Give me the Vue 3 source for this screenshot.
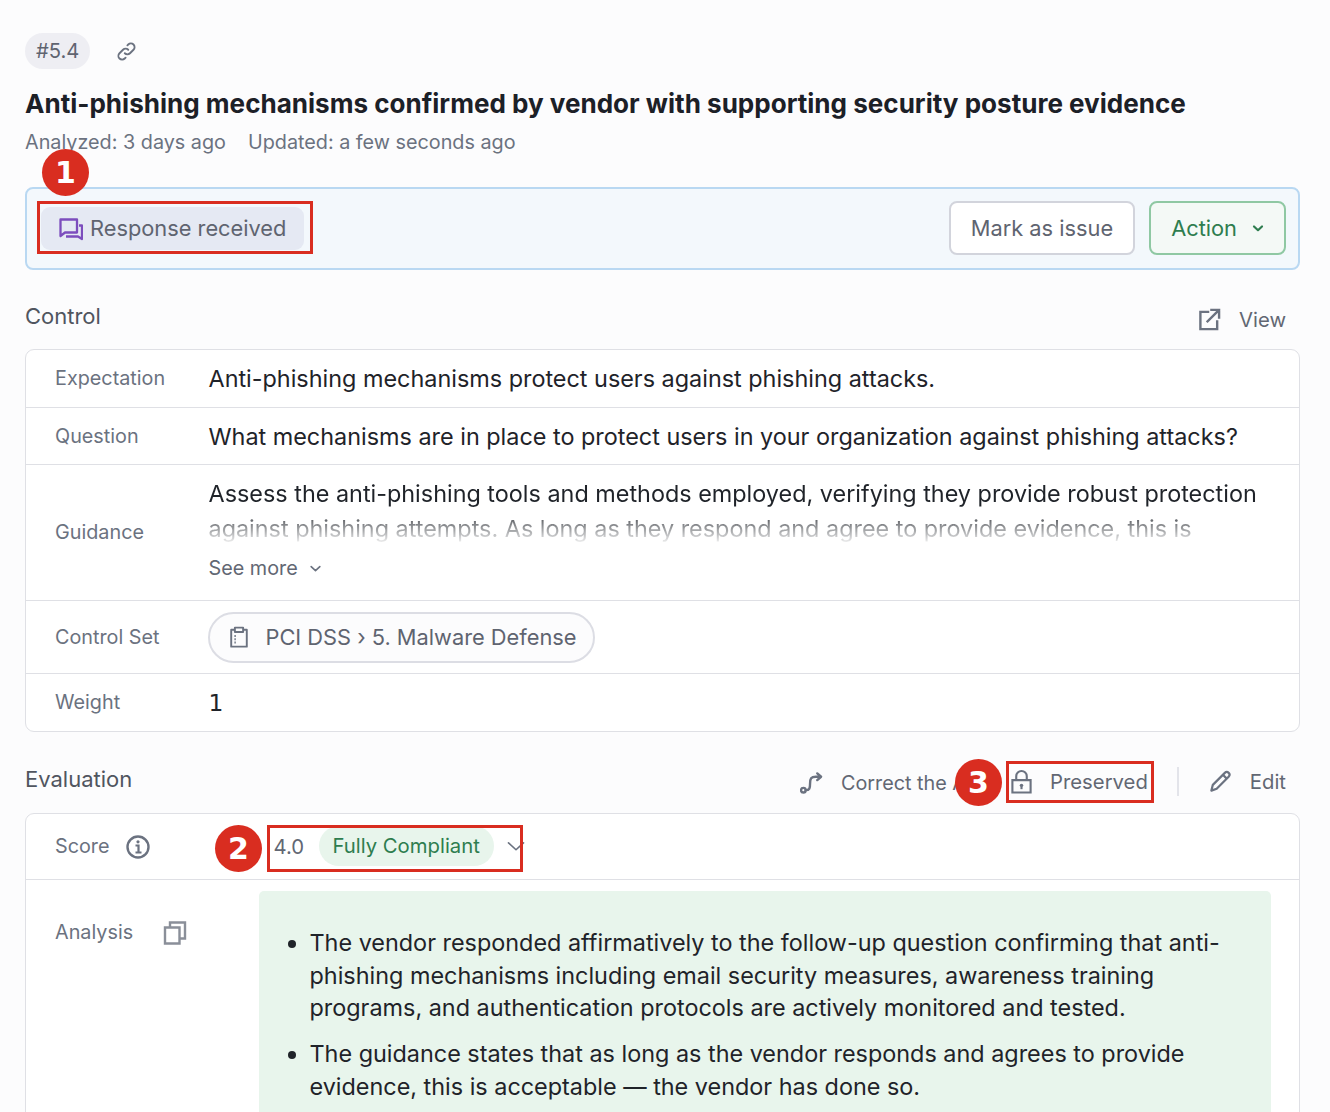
<template>
  <div class="page">
    <div class="top-row">
      <span class="num-chip">#5.4</span>
      <svg class="link-icon" viewBox="0 0 24 24" fill="none" stroke="#6b7280" stroke-width="2.100" stroke-linecap="round" stroke-linejoin="round">
        <path d="M10 14a4.200 4.200 0 0 0 6 0l4-4a4.200 4.200 0 0 0-6-6l-1 1" />
        <path d="M14 10a4.200 4.200 0 0 0-6 0l-4 4a4.200 4.200 0 0 0 6 6l1-1" />
      </svg>
    </div>
    <h1 class="title">Anti-phishing mechanisms confirmed by vendor with supporting security posture evidence</h1>
    <div class="dates">
      <span>Analyzed: 3 days ago</span>
      <span>Updated: a few seconds ago</span>
    </div>

    <div class="status-bar">
      <div class="status-pill">
        <svg class="chat-icon" viewBox="0 0 24 24" fill="none" stroke="#7c4dbd" stroke-width="2.300" stroke-linejoin="round">
          <path d="M1.500 2.500h16.500v13H6L1.500 19z" />
          <path d="M7 19.500h12l4 2.500V8.500h-3" />
        </svg>
        <span>Response received</span>
      </div>
      <div class="status-actions">
        <button class="btn">Mark as issue</button>
        <button class="btn btn-green">
          Action
          <svg class="action-caret" viewBox="0 0 12 12" fill="none" stroke="#2e7d4f" stroke-width="2.200" stroke-linecap="round" stroke-linejoin="round"><path d="M2 4.500 6 8.200l4-3.700" /></svg>
        </button>
      </div>
    </div>

    <div class="section-head control-head">
      <h2>Control</h2>
      <div class="head-actions">
        <span class="head-link">
          <svg class="head-icon" viewBox="0 0 24 24" fill="none" stroke="#6b7280" stroke-width="2.500" stroke-linecap="square">
            <path d="M10.500 4H2.500v18h17.500v-8" />
            <path d="M10 14 21.500 2.500M14 2h8v8" />
          </svg>
          View
        </span>
      </div>
    </div>

    <div class="card">
      <div class="row exp-row">
        <div class="label">Expectation</div>
        <div class="value">Anti-phishing mechanisms protect users against phishing attacks.</div>
      </div>
      <div class="row q-row">
        <div class="label">Question</div>
        <div class="value">What mechanisms are in place to protect users in your organization against phishing attacks?</div>
      </div>
      <div class="row guidance-row">
        <div class="label">Guidance</div>
        <div class="value guidance-value">
          <div class="clamp">Assess the anti-phishing tools and methods employed, verifying they provide robust protection against phishing attempts. As long as they respond and agree to provide evidence, this is</div>
          <div class="see-more">
            See more
            <svg class="see-caret" viewBox="0 0 12 12" fill="none" stroke="#6b7280" stroke-width="1.500" stroke-linecap="round" stroke-linejoin="round"><path d="M2 4.200 6 8l4-3.800" /></svg>
          </div>
        </div>
      </div>
      <div class="row set-row">
        <div class="label">Control Set</div>
        <div class="value">
          <span class="set-chip">
            <svg class="clip-icon" viewBox="0 0 24 24" fill="none" stroke="#6b7280" stroke-width="2.100" stroke-linejoin="round">
              <path d="M7.500 4H3.500v18.500h17V4h-4" />
              <path d="M7.500 1.800h9v4.700h-9z" />
              <path d="M7 11h1.500M7 14.500h1.500M7 18h1.500" />
            </svg>
            <span>PCI DSS <span class="crumb">›</span> 5. Malware Defense</span>
          </span>
        </div>
      </div>
      <div class="row weight-row">
        <div class="label">Weight</div>
        <div class="value weight-value">1</div>
      </div>
    </div>

    <div class="section-head eval-head">
      <h2>Evaluation</h2>
      <div class="head-actions">
        <span class="head-link correct">
          <svg class="head-icon" viewBox="0 0 24 24" fill="none" stroke="#6b7280" stroke-width="2.500" stroke-linecap="round" stroke-linejoin="round">
            <circle cx="3.500" cy="20" r="2.400" />
            <path d="M6 20c4 0 4.500-2 4.500-7s1-7 6-7h5M18 2.500 22 6l-4 3.500" />
          </svg>
          Correct the AI
        </span>
        <span class="head-link preserved">
          <svg class="lock-icon" viewBox="0 0 24 24" fill="none" stroke="#6b7280" stroke-width="2.200">
            <path d="M2.500 10h19v13h-19zM6.500 10V6a5.500 5.500 0 0 1 11 0v4" />
            <circle cx="12" cy="15.500" r="1.800" fill="#6b7280" stroke="none" />
            <path d="M12 16v3.500" />
          </svg>
          Preserved
        </span>
        <span class="divider"></span>
        <span class="head-link">
          <svg class="head-icon" viewBox="0 0 24 24" fill="none" stroke="#6b7280" stroke-width="2.300" stroke-linejoin="round">
            <path d="M2.500 21.500 4 15.500 16.500 3a2.800 2.800 0 0 1 4 4L8 19.500z" />
            <path d="M14.500 5l4 4" />
          </svg>
          Edit
        </span>
      </div>
    </div>

    <div class="card eval-card">
      <div class="row score-row">
        <div class="label score-label">
          Score
          <svg class="info-icon" viewBox="0 0 24 24" fill="none" stroke="#6b7280" stroke-width="2.400">
            <circle cx="12" cy="12" r="10.500" />
            <path d="M9.500 10.500H12.500V17M9.500 17.500h6" stroke-width="2.200" />
            <circle cx="12" cy="6.800" r="1.600" fill="#6b7280" stroke="none" />
          </svg>
        </div>
        <div class="score-value">
          <span class="score-num">4.0</span>
          <span class="score-chip">Fully Compliant</span>
          <svg class="score-caret" viewBox="0 0 16 16" fill="none" stroke="#6b7280" stroke-width="1.300" stroke-linecap="round" stroke-linejoin="round"><path d="M2 5.500 8 11l6-5.500" /></svg>
        </div>
      </div>
      <div class="analysis-row">
        <div class="label analysis-label">
          Analysis
          <svg class="copy-icon" viewBox="0 0 24 24" fill="none" stroke="#8a8f99" stroke-width="2.400">
            <path d="M2 7h14.500v16H2z" />
            <path d="M7 7V2h15v16h-5.500" />
          </svg>
        </div>
        <div class="analysis-box">
          <ul>
            <li>The vendor responded affirmatively to the follow-up question confirming that anti-phishing mechanisms including email security measures, awareness training programs, and authentication protocols are actively monitored and tested.</li>
            <li>The guidance states that as long as the vendor responds and agrees to provide evidence, this is acceptable — the vendor has done so.</li>
          </ul>
        </div>
      </div>
    </div>

    <div class="mark mark-box box-1"></div>
    <div class="mark mark-box box-2"></div>
    <div class="mark mark-box box-3"></div>
    <div class="mark mark-dot dot-1">1</div>
    <div class="mark mark-dot dot-2">2</div>
    <div class="mark mark-dot dot-3">3</div>
  </div>
</template>

<script setup>
</script>

<style>
html, body { margin: 0; background: #fcfcfd; }
</style>

<style scoped>
.page {
  position: relative;
  width: 1330px;
  height: 1112px;
  overflow: hidden;
  box-sizing: border-box;
  padding: 33px 30px 0 25px;
  background: #fcfcfd;
  font-family: Inter, "Liberation Sans", sans-serif;
  color: #1f2329;
}
.top-row { display: flex; align-items: center; height: 36px; }
.num-chip {
  height: 36px;
  line-height: 36px;
  padding: 0 11px;
  border-radius: 18px;
  background: #eeeef3;
  color: #5f6470;
  font-size: 20.200px;
}
.link-icon { width: 21px; height: 21px; margin-left: 26px; }
.title {
  margin: 18px 0 0;
  font-size: 26.050px;
  line-height: 33px;
  font-weight: 700;
  color: #1c2027;
  white-space: nowrap;
}
.dates {
  display: flex;
  gap: 22px;
  margin-top: 7px;
  font-size: 19.800px;
  line-height: 30px;
  color: #6b7280;
}
.status-bar {
  display: flex;
  justify-content: space-between;
  align-items: center;
  box-sizing: border-box;
  height: 83px;
  margin-top: 30px;
  padding: 0 12px 0 14px;
  border: 2px solid #b9d8f2;
  border-radius: 8px;
  background: #f3f8fc;
}
.status-pill {
  display: flex;
  align-items: center;
  gap: 7px;
  height: 43px;
  padding: 0 18px;
  border-radius: 9px;
  background: #e5e9f3;
  color: #5f6470;
  font-size: 21.800px;
  line-height: 41px;
}
.status-pill span { margin-top: -1px; }
.chat-icon { width: 24px; height: 24px; }
.status-actions { display: flex; gap: 14px; margin-top: -2px; }
.btn {
  display: flex;
  align-items: center;
  box-sizing: border-box;
  height: 54px;
  padding: 0 20px;
  border: 2px solid #d2d4dc;
  border-radius: 8px;
  background: #fff;
  color: #5f6470;
  font: inherit;
  font-size: 21.800px;
}
.btn-green {
  border-color: #8fc8a3;
  background: #f4f9f6;
  color: #2e7d4f;
}
.action-caret { width: 12px; height: 12px; margin-left: 15px; }
.section-head {
  display: flex;
  justify-content: space-between;
  align-items: center;
}
.section-head h2 {
  margin: 0 0 2px;
  font-size: 22px;
  font-weight: 400;
  color: #50555f;
}
.control-head { height: 48px; margin-top: 23px; }
.eval-head { height: 50px; margin-top: 23px; }
.head-actions { display: flex; align-items: center; gap: 18px; padding: 4px 14px 0 0; }
.eval-head .head-actions { padding-top: 3px; }
.head-link {
  display: flex;
  align-items: center;
  gap: 18px;
  font-size: 20.300px;
  color: #626773;
  white-space: nowrap;
}
.head-icon { width: 23px; height: 23px; }
.lock-icon { width: 23px; height: 26px; }
.correct { width: 194px; overflow: hidden; margin: 2px -2px 0 0; font-size: 19.800px; }
.preserved { gap: 17px; margin-right: 11px; }
.divider { width: 2px; height: 29px; background: #e3e4ea; margin-right: 12px; }
.card {
  border: 1px solid #dfe0e5;
  border-radius: 9px;
  background: #fff;
  margin-top: 8px;
}
.row {
  display: grid;
  grid-template-columns: 153.500px 1fr;
  align-items: center;
  padding-left: 29px;
  border-bottom: 1px solid #dfe0e5;
}
.row:last-child { border-bottom: 0; }
.label { font-size: 19.800px; color: #6b7280; margin-top: -1px; }
.value { font-size: 23.400px; color: #1f2329; padding-right: 30px; }
.exp-row { height: 57px; }
.q-row { height: 56px; }
.q-row .label { margin-top: 0; }
.guidance-row { height: 135px; }
.set-row { height: 72px; }
.set-row .label { margin-top: 0; }
.weight-row { height: 57px; }
.weight-value { font-family: "DejaVu Sans", sans-serif; font-size: 23.400px; }
.guidance-value { align-self: start; padding-top: 11px; padding-right: 36px; }
.clamp {
  height: 70px;
  line-height: 35px;
  overflow: hidden;
  -webkit-mask-image: linear-gradient(to bottom, #000 45%, rgba(0,0,0,0.08) 95%);
  mask-image: linear-gradient(to bottom, #000 45%, rgba(0,0,0,0.08) 95%);
}
.see-more {
  display: flex;
  align-items: center;
  gap: 11px;
  margin-top: 7px;
  font-size: 19.800px;
  line-height: 30px;
  color: #626773;
}
.see-caret { width: 13px; height: 13px; }
.set-chip {
  display: inline-flex;
  align-items: center;
  gap: 16px;
  box-sizing: border-box;
  height: 51px;
  margin-left: -0.500px;
  padding: 0 16.500px 0 17.500px;
  border: 2px solid #dcdde4;
  border-radius: 26px;
  background: #fcfcfd;
  font-size: 21.800px;
  color: #5f6470;
}
.clip-icon { width: 22px; height: 22px; }
.crumb { font-size: 22px; }
.eval-card { margin-top: 8px; height: 400px; }
.score-row { height: 65px; grid-template-columns: 219px 1fr; }
.score-label { display: flex; align-items: center; gap: 16px; }
.info-icon { width: 24px; height: 24px; margin-top: 1px; }
.score-value { display: flex; align-items: center; font-size: 20.300px; color: #626773; padding-left: 0; margin-top: -1px; }
.score-num { width: 45px; margin-left: -0.500px; }
.score-chip {
  height: 40px;
  line-height: 40px;
  padding: 0 14px;
  border-radius: 20px;
  background: #e8f5ec;
  color: #2e7d4f;
}
.score-caret { width: 20px; height: 20px; margin-left: 12px; }
.analysis-row {
  display: grid;
  grid-template-columns: 204px 1012px;
  padding-left: 29px;
  padding-top: 11px;
}
.analysis-label {
  display: flex;
  align-items: center;
  gap: 30px;
  height: 80px;
  margin-top: 1px;
}
.copy-icon { width: 24px; height: 25px; }
.analysis-box {
  height: 400px;
  border-radius: 5px 5px 0 0;
  background: #e8f5ec;
  padding: 36px 24px 0 0;
  box-sizing: border-box;
  font-size: 23.400px;
  line-height: 32.500px;
  color: #1f2329;
}
.analysis-box ul { margin: 0; padding-left: 50.500px; }
.analysis-box li { margin-bottom: 13.500px; }
.mark { position: absolute; }
.mark-box { box-sizing: border-box; border: 3px solid #d92d20; }
.box-1 { left: 37px; top: 201px; width: 276px; height: 53px; }
.box-2 { left: 267px; top: 825px; width: 256px; height: 47px; }
.box-3 { left: 1006px; top: 761px; width: 148px; height: 42px; }
.mark-dot {
  width: 47px;
  height: 47px;
  line-height: 47px;
  border-radius: 50%;
  background: #d92d20;
  color: #fff;
  text-align: center;
  font-family: "DejaVu Sans", sans-serif;
  font-size: 30px;
  font-weight: 700;
}
.dot-1 { left: 42px; top: 149px; }
.dot-2 { left: 215px; top: 825px; }
.dot-3 { left: 955px; top: 759px; }
</style>
